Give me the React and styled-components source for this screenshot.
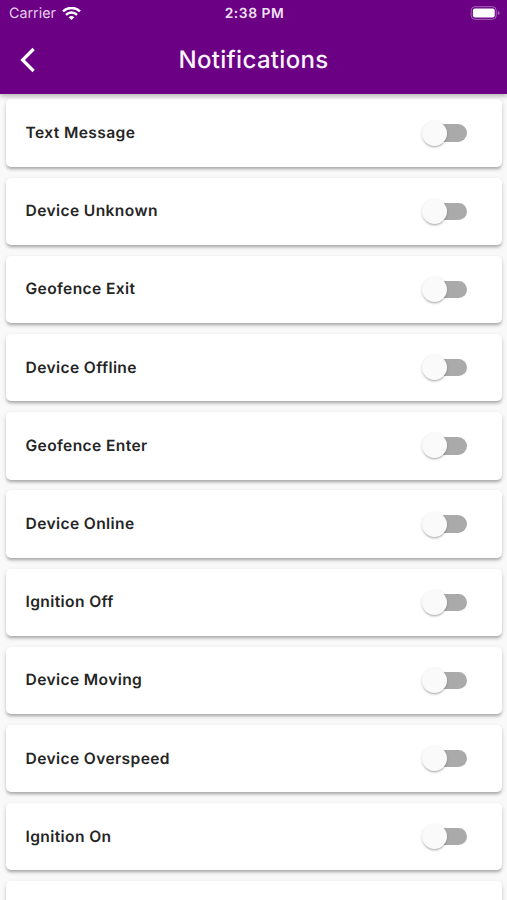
import React from "react";
import styled, { createGlobalStyle } from "styled-components";

const GlobalStyle = createGlobalStyle`
  *, *::before, *::after { box-sizing: border-box; }
  html, body { margin: 0; padding: 0; overflow: hidden; }
  body {
    background: #f9f9f9;
    font-family: Inter, "Liberation Sans", sans-serif;
    text-rendering: geometricPrecision;
  }
`;

const Screen = styled.div`
  display: flex;
  flex-direction: column;
  width: 100%;
  height: 900px;
  overflow: hidden;
  background: #f9f9f9;
`;

const Header = styled.header`
  position: relative;
  z-index: 1;
  flex: none;
  height: 94px;
  background: #6b0085;
  color: #fff;
  box-shadow: 0 2px 5px rgba(0, 0, 0, 0.22), 0 3px 3px rgba(0, 0, 0, 0.06);
`;

const StatusBar = styled.div`
  display: grid;
  grid-template-columns: 1fr auto 1fr;
  align-items: center;
  height: 28px;
  padding: 0 7px 0 9px;
`;

const Carrier = styled.div`
  display: flex;
  align-items: center;
  gap: 6px;
  font-size: 14.3px;
  line-height: 18px;
  color: #e6cfeb;
`;

const Clock = styled.time`
  font-size: 13.8px;
  font-weight: 600;
  line-height: 18px;
  letter-spacing: 0.55px;
  color: #f0e0f3;
`;

const Battery = styled.svg`
  justify-self: end;
  margin-bottom: 2px;
`;

const NavBar = styled.div`
  display: grid;
  grid-template-columns: 56px 1fr 56px;
  align-items: center;
  height: 64px;
`;

const BackButton = styled.button`
  display: flex;
  align-items: center;
  justify-content: center;
  height: 48px;
  padding: 0;
  border: 0;
  background: none;
  color: inherit;
`;

const Title = styled.h1`
  margin: 0;
  text-align: center;
  font-size: 24px;
  font-weight: 500;
  line-height: 30px;
  letter-spacing: 0.32px;
  color: #fbf3fc;
`;

const List = styled.main`
  display: flex;
  flex-direction: column;
  gap: 10.8px;
  padding: 5.4px 5px 0 6px;
`;

const Card = styled.label`
  display: flex;
  flex: none;
  align-items: center;
  justify-content: space-between;
  height: 67.4px;
  padding: 0 35px 0 19.5px;
  border-radius: 5px;
  background: #fff;
  box-shadow: 0 3px 3px -1px rgba(0, 0, 0, 0.2), 0 2px 4px rgba(0, 0, 0, 0.17);
`;

const Label = styled.span`
  font-size: 15.6px;
  font-weight: 600;
  line-height: 20px;
  letter-spacing: 0.38px;
  color: #252525;
  transform: translateY(-0.3px);
`;

const Track = styled.span`
  display: flex;
  align-items: center;
  width: 43px;
  height: 17.4px;
  border-radius: 9px;
  background: #aaa;
`;

const Knob = styled.span`
  flex: none;
  width: 25px;
  height: 25px;
  margin-left: -2px;
  border-radius: 50%;
  background: #fafafa;
  box-shadow: 0 2px 2px -1px rgba(0, 0, 0, 0.2), 0 1px 3px rgba(0, 0, 0, 0.18);
`;

const notifications = [
  "Text Message",
  "Device Unknown",
  "Geofence Exit",
  "Device Offline",
  "Geofence Enter",
  "Device Online",
  "Ignition Off",
  "Device Moving",
  "Device Overspeed",
  "Ignition On",
];

function WifiIcon() {
  return (
    <svg width="19" height="14" viewBox="0 0 19 14" fill="none" stroke="#fff" strokeWidth="2.5">
      <path d="M1 4.4 A12.2 12.2 0 0 1 18 4.4" />
      <path d="M4 7.8 A7.9 7.9 0 0 1 15 7.8" />
      <path d="M9.5 13.1 L6.6 10.3 A4.2 4.2 0 0 1 12.4 10.3 Z" fill="#fff" stroke="none" />
    </svg>
  );
}

function BatteryIcon() {
  return (
    <Battery width="30" height="14" viewBox="0 0 30 14">
      <rect x="1.2" y="0.7" width="25" height="12.6" rx="3.7" fill="none" stroke="#a566b5" strokeWidth="1" />
      <rect x="2.9" y="2.4" width="21.8" height="9.2" rx="2" fill="#fff" />
      <path d="M27.8 4.8 Q29.7 5.5 29.7 7 Q29.7 8.5 27.8 9.2 Z" fill="#a566b5" />
    </Battery>
  );
}

function Switch() {
  return (
    <Track role="switch" aria-checked="false">
      <Knob />
    </Track>
  );
}

export default function App() {
  return (
    <>
      <GlobalStyle />
      <Screen>
        <Header>
          <StatusBar>
            <Carrier>
              Carrier
              <WifiIcon />
            </Carrier>
            <Clock>2:38 PM</Clock>
            <BatteryIcon />
          </StatusBar>
          <NavBar>
            <BackButton aria-label="Back">
              <svg width="16" height="26" viewBox="0 0 16 26" fill="none" stroke="#fff" strokeWidth="3.2">
                <path d="M13.6 2 L2.6 13 L13.6 24" />
              </svg>
            </BackButton>
            <Title>Notifications</Title>
          </NavBar>
        </Header>
        <List>
          {notifications.map((name) => (
            <Card key={name}>
              <Label>{name}</Label>
              <Switch />
            </Card>
          ))}
          <Card />
        </List>
      </Screen>
    </>
  );
}
